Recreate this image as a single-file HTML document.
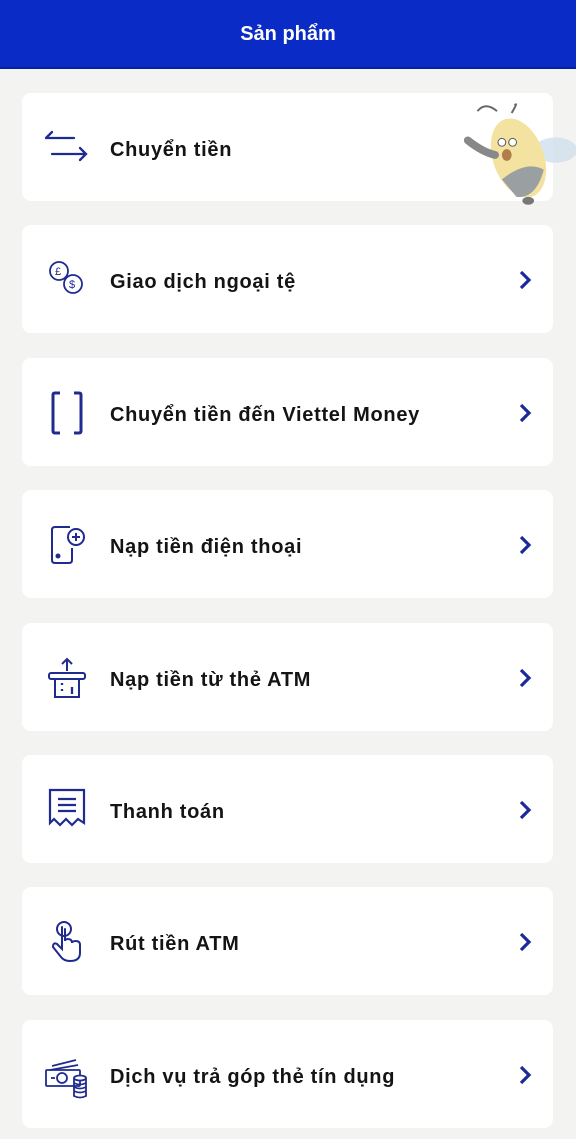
<!DOCTYPE html>
<html><head><meta charset="utf-8"><style>
*{margin:0;padding:0;box-sizing:border-box}
body{width:576px;height:1139px;background:#f3f3f1;font-family:"Liberation Sans",sans-serif;position:relative;overflow:hidden}
.hd{position:absolute;left:0;top:0;width:576px;height:69px;background:#0a2bc6;color:#fff;font-weight:bold;font-size:20px;text-align:center;line-height:68px;border-bottom:2px solid #0622a0}
.c{position:absolute;left:22px;width:531px;height:108px;background:#fff;border-radius:9px}
.t{position:absolute;left:88px;top:3px;line-height:108px;font-size:20px;font-weight:bold;color:#141414;letter-spacing:.7px}
.ch{position:absolute;left:494px;top:44px}
.ic{position:absolute;left:20px;top:30px}
</style></head><body>
<div class="hd">Sản phẩm</div>

<div class="c" style="top:93px">
<svg class="ic" width="50" height="50" viewBox="0 0 50 50" fill="none" stroke="#1f2b8f" stroke-width="2.3" stroke-linecap="round"><path d="M4 15H32M10 9L4 15"/><path d="M10 31H44M38 25L44 31L38 37"/></svg>
<div class="t">Chuyển tiền</div>
</div>
<svg style="position:absolute;left:458px;top:100px" width="118" height="108" viewBox="0 0 121 108">
<ellipse cx="100" cy="50" rx="22" ry="13" fill="#cfe0ee" opacity=".8"/>
<path d="M40 10Q28 0 20 10" stroke="#666" stroke-width="2" fill="none"/>
<path d="M55 12Q62 0 58 4" stroke="#666" stroke-width="2" fill="none"/>
<ellipse cx="62" cy="58" rx="26" ry="42" transform="rotate(-20 62 58)" fill="#f4e2a0"/>
<path d="M45 80Q70 60 88 70Q80 100 60 98Z" fill="#9aa0a2"/>
<path d="M10 40Q25 52 38 55" stroke="#888" stroke-width="8" stroke-linecap="round"/>
<circle cx="45" cy="42" r="4" fill="#fff" stroke="#555"/><circle cx="56" cy="42" r="4" fill="#fff" stroke="#555"/>
<ellipse cx="50" cy="55" rx="5" ry="6" fill="#b07d4c"/>
<ellipse cx="72" cy="102" rx="6" ry="4" fill="#777"/>
</svg>

<div class="c" style="top:225px">
<svg class="ic" width="50" height="50" viewBox="0 0 50 50" fill="none" stroke="#1f2b8f" stroke-width="1.8"><circle cx="17" cy="16" r="9"/><circle cx="31" cy="29" r="9" fill="#fff"/><text x="13" y="20" font-size="11" fill="#1f2b8f" stroke="none" font-family="Liberation Sans">£</text><text x="27" y="33" font-size="11" fill="#1f2b8f" stroke="none" font-family="Liberation Sans">$</text></svg>
<div class="t">Giao dịch ngoại tệ</div>
<svg class="ch" width="18" height="22" viewBox="0 0 18 22"><path d="M5 3L13 11L5 19" fill="none" stroke="#1a2a9a" stroke-width="3.2"/></svg>
</div>

<div class="c" style="top:358px">
<svg class="ic" width="50" height="50" viewBox="0 0 50 50" fill="none" stroke="#1f2b8f" stroke-width="3"><path d="M18 5H13Q11 5 11 7V43Q11 45 13 45H18"/><path d="M32 5H37Q39 5 39 7V43Q39 45 37 45H32"/></svg>
<div class="t">Chuyển tiền đến Viettel Money</div>
<svg class="ch" width="18" height="22" viewBox="0 0 18 22"><path d="M5 3L13 11L5 19" fill="none" stroke="#1a2a9a" stroke-width="3.2"/></svg>
</div>

<div class="c" style="top:490px">
<svg class="ic" width="50" height="50" viewBox="0 0 50 50" fill="none" stroke="#1f2b8f" stroke-width="2"><path d="M28 7H13Q10 7 10 10V40Q10 43 13 43H27Q30 43 30 40V28"/><circle cx="16" cy="36" r="1.5" fill="#1f2b8f"/><circle cx="34" cy="17" r="8" fill="#fff"/><path d="M34 13V21M30 17H38"/></svg>
<div class="t">Nạp tiền điện thoại</div>
<svg class="ch" width="18" height="22" viewBox="0 0 18 22"><path d="M5 3L13 11L5 19" fill="none" stroke="#1a2a9a" stroke-width="3.2"/></svg>
</div>

<div class="c" style="top:623px">
<svg class="ic" width="50" height="50" viewBox="0 0 50 50" fill="none" stroke="#1f2b8f" stroke-width="2"><path d="M25 6V18M20 11L25 6L30 11"/><rect x="7" y="20" width="36" height="6" rx="2"/><path d="M13 26V44H37V26"/><path d="M20 30V32M20 36V38M30 34V41" stroke-width="2.3"/></svg>
<div class="t">Nạp tiền từ thẻ ATM</div>
<svg class="ch" width="18" height="22" viewBox="0 0 18 22"><path d="M5 3L13 11L5 19" fill="none" stroke="#1a2a9a" stroke-width="3.2"/></svg>
</div>

<div class="c" style="top:755px">
<svg class="ic" width="50" height="50" viewBox="0 0 50 50" fill="none" stroke="#1f2b8f" stroke-width="2.2"><path d="M8 5H42V38L36 34L30 40L24 34L18 40L12 34L8 38Z"/><path d="M16 14H34M16 20H34M16 26H34"/></svg>
<div class="t">Thanh toán</div>
<svg class="ch" width="18" height="22" viewBox="0 0 18 22"><path d="M5 3L13 11L5 19" fill="none" stroke="#1a2a9a" stroke-width="3.2"/></svg>
</div>

<div class="c" style="top:887px">
<svg class="ic" width="50" height="50" viewBox="0 0 50 50" fill="none" stroke="#1f2b8f" stroke-width="2" stroke-linecap="round"><circle cx="22" cy="12" r="7"/><path d="M20 10V32L15 27Q11 25 11 30L19 40Q22 44 28 44Q38 44 38 36V28Q38 24 34 24Q30 24 30 26Q30 22 26 22Q23 22 23 24V12"/></svg>
<div class="t">Rút tiền ATM</div>
<svg class="ch" width="18" height="22" viewBox="0 0 18 22"><path d="M5 3L13 11L5 19" fill="none" stroke="#1a2a9a" stroke-width="3.2"/></svg>
</div>

<div class="c" style="top:1020px">
<svg class="ic" width="50" height="50" viewBox="0 0 50 50" fill="none" stroke="#1f2b8f" stroke-width="1.8"><path d="M10 16L34 10M8 20L36 15"/><rect x="4" y="20" width="34" height="16" rx="1"/><circle cx="20" cy="28" r="5"/><path d="M9 28H13"/><ellipse cx="38" cy="28" rx="6" ry="2.5" fill="#fff"/><path d="M32 28V46Q38 49 44 46V28M32 33Q38 36 44 33M32 37Q38 40 44 37M32 41Q38 44 44 41"/></svg>
<div class="t">Dịch vụ trả góp thẻ tín dụng</div>
<svg class="ch" width="18" height="22" viewBox="0 0 18 22"><path d="M5 3L13 11L5 19" fill="none" stroke="#1a2a9a" stroke-width="3.2"/></svg>
</div>
</body></html>
